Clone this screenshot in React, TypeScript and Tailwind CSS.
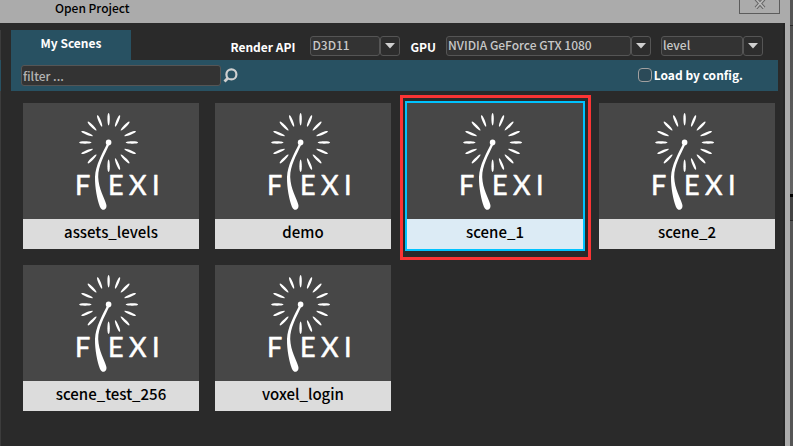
import React, { useState } from 'react';

const scenes = ['assets_levels', 'demo', 'scene_1', 'scene_2', 'scene_test_256', 'voxel_login'];

// every 22.5 degrees, except the one hidden by the stem
const spokes = [0, 1, 2, 3, 4, 5, 6, 7, 8, 10, 11, 12, 13, 14, 15];

const FlexiLogo: React.FC = () => (
  <svg viewBox="0 0 176 116" className="block w-full h-[116px]" fill="#fff" aria-hidden="true">
    {spokes.map((n) => (
      <path
        key={n}
        d="M85.6 10C86.4 10 86.8 12.5 86.8 15.5C86.8 18.5 86.4 22.4 85.6 22.4C84.8 22.4 84.4 18.5 84.4 15.5C84.4 12.5 84.8 10 85.6 10Z"
        transform={`rotate(${n * 22.5} 85.6 39.5)`}
      />
    ))}
    <circle cx="85.6" cy="39.4" r="2.8" />
    <path d="M84.4 40C79 51 72.6 62 72 74C71.8 85 74.4 97 76.8 103.5C78 106.4 79.8 107.4 81.6 106.6C83.6 105.6 83.8 103.5 83.2 101.3C81.5 95 75.6 86 75.2 74C75.2 63 81 53 86.8 40.6Z" />
    <g fontFamily="Lato, sans-serif" fontSize="27" stroke="#fff" strokeWidth="0.5" strokeLinejoin="round">
      <text x="52" y="92">F</text>
      <text x="85" y="92">E</text>
      <text x="106" y="92">X</text>
      <text x="129" y="92">I</text>
    </g>
  </svg>
);

type DropDownProps = { label: string; options: string[]; width: string };

const DropDown: React.FC<DropDownProps> = ({ label, options, width }) => (
  <div className={`relative flex h-5 ${width}`}>
    <span className="flex-1 rounded-[3px] border border-[#555] bg-[#333]" />
    <span className="flex w-5 items-center justify-center rounded-[3px] border border-[#555] bg-[#2d2d2d]">
      <svg width="10" height="6" viewBox="0 0 10 6" fill="#d0d0d0">
        <path d="M0 0H10L5 5.5Z" />
      </svg>
    </span>
    <select
      aria-label={label}
      className="absolute inset-0 w-full appearance-none bg-transparent pr-5 pb-[2px] pl-[2px] leading-[18px] font-medium text-[#c8c8c8] outline-none"
    >
      {options.map((option) => (
        <option key={option}>{option}</option>
      ))}
    </select>
  </div>
);

type SceneCardProps = { name: string; selected: boolean; onSelect: () => void };

const SceneCard: React.FC<SceneCardProps> = ({ name, selected, onSelect }) => (
  <div className="relative w-44">
    <button
      onClick={onSelect}
      className={`block w-full bg-[#474747] ${selected ? 'outline-2 outline-[#00c3ff]' : 'outline-none'}`}
    >
      <FlexiLogo />
      <span
        className={`block h-[30px] text-[15px] leading-[26px] font-medium text-black ${selected ? 'bg-[#dcebf5]' : 'bg-[#dcdcdc]'}`}
      >
        {name}
      </span>
    </button>
    {selected && (
      <span className="pointer-events-none absolute -top-2 -right-2 -bottom-[11px] -left-[7px] border-3 border-[#fb3434]" />
    )}
  </div>
);

const App: React.FC = () => {
  const [selected, setSelected] = useState('scene_1');

  return (
    <div className="flex min-h-screen font-['Noto_Sans_CJK_SC',sans-serif] text-xs">
      <div className="flex flex-1 flex-col bg-[#ababab] pr-[5px]">
        <header className="flex h-[23px] items-start justify-between pl-[55px]">
          <h1 className="leading-4 font-medium text-black">Open Project</h1>
          <button
            aria-label="Close"
            className="mr-[5px] flex h-[14px] w-[41px] justify-center border border-t-0 border-[#5c5c5c]"
          >
            <svg width="12" height="9" viewBox="0 0 12 9" fill="none">
              <path d="M2 -1L10 8M10 -1L2 8" stroke="#666" strokeWidth="3.6" />
              <path d="M2 -1L10 8M10 -1L2 8" stroke="#bbb" strokeWidth="1.6" />
            </svg>
          </button>
        </header>

        <div className="flex flex-1 border-r-2 border-[#242424] bg-[#2a2a2a] pt-[7px] pr-[5px]">
          <div className="mr-[10px] flex w-px flex-col bg-[#3c3c3c]">
            <span className="mt-[30px] h-[31px] bg-[#285162]" />
          </div>

          <main className="flex-1">
            <div className="flex h-[30px] font-bold text-white">
              <button className="w-[120px] bg-[#285162] pb-1">My Scenes</button>
              <div className="flex flex-1 items-center justify-end pt-[2px] pr-[15px]">
                <span className="pt-[2px] pr-[15px]">Render API</span>
                <DropDown label="Render API" options={['D3D11', 'D3D12', 'Vulkan']} width="w-[90px]" />
                <span className="pt-[2px] pr-[10px] pl-[10px]">GPU</span>
                <DropDown label="GPU" options={['NVIDIA GeForce GTX 1080']} width="w-[205px] mr-[10px]" />
                <DropDown label="Sort by" options={['level', 'name']} width="w-[102px]" />
              </div>
            </div>

            <div className="flex h-[31px] items-center justify-between bg-[#285162] pr-[35px] pl-[10px]">
              <div className="flex items-center gap-[2px]">
                <input
                  type="text"
                  aria-label="Filter scenes"
                  placeholder="filter ..."
                  className="h-[21px] w-[200px] rounded-[3px] border border-[#555] bg-[#333] px-px font-medium text-[#c8c8c8] outline-none placeholder:text-[#b4b4b4]"
                />
                <svg width="15" height="15" viewBox="0 0 15 15" fill="none" stroke="#d0d0d0" strokeWidth="2.2">
                  <circle cx="8.4" cy="6.4" r="5" />
                  <path d="M5 10L1.5 13.5" strokeWidth="2.8" />
                </svg>
              </div>
              <label className="flex items-center gap-[2px] pb-[2px] font-bold text-white">
                <input
                  type="checkbox"
                  className="size-[14px] appearance-none rounded-[4px] border border-[#a0a0a0] bg-[#2b4a58] checked:bg-[#c8c8c8]"
                />
                Load by config.
              </label>
            </div>

            <div className="flex flex-wrap gap-4 pt-3 pl-3">
              {scenes.map((name) => (
                <SceneCard
                  key={name}
                  name={name}
                  selected={name === selected}
                  onSelect={() => setSelected(name)}
                />
              ))}
            </div>
          </main>
        </div>
      </div>

      {/* sliver of the window behind */}
      <div className="flex w-[3px] flex-col bg-[#555]">
        <span className="h-[26px] border-b border-[#2a2a2a]" />
        <span className="h-[168px] bg-linear-to-b from-[#505050] to-[#646464]" />
        <span className="h-[3px] bg-black" />
        <span className="h-6 border-b border-[#2a2a2a] bg-[#444]" />
      </div>
    </div>
  );
};

export default App;
